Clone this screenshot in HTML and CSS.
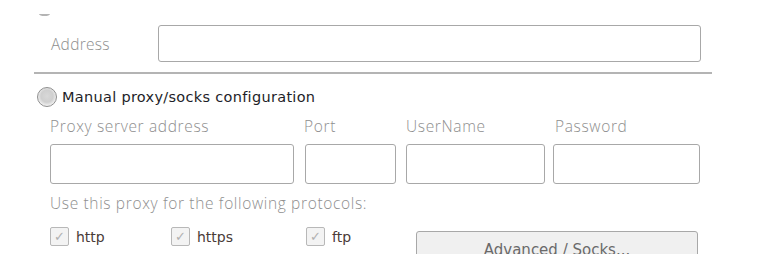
FILE: index.html
```html
<!DOCTYPE html>
<html>
<head>
<meta charset="utf-8">
<link rel="stylesheet" href="styles.css">
</head>
<body>
<div class="frame">
  <div class="top-strip"><span class="radio-stub"></span></div>
  <div class="address-row">
    <span class="label address-label">Address</span>
    <span class="input address-input"></span>
  </div>
  <div class="divider"></div>
  <div class="radio-row">
    <span class="radio"></span>
    <span class="radio-text">Manual proxy/socks configuration</span>
  </div>
  <div class="proxy-grid">
    <span class="label">Proxy server address</span>
    <span class="label port-label">Port</span>
    <span class="label">UserName</span>
    <span class="label pass-label">Password</span>
    <span class="input w-server"></span>
    <span class="input w-port"></span>
    <span class="input w-user"></span>
    <span class="input w-pass"></span>
  </div>
  <div class="label protocols">Use this proxy for the following protocols:</div>
  <div class="check-row">
    <span class="check c-http"><span class="box">&#10003;</span>http</span>
    <span class="check c-https"><span class="box">&#10003;</span>https</span>
    <span class="check c-ftp"><span class="box">&#10003;</span>ftp</span>
    <span class="button">Advanced / Socks...</span>
  </div>
</div>
</body>
</html>
```

FILE: styles.css
```css
html, body {
  margin: 0;
  padding: 0;
  background: #ffffff;
}
.frame {
  width: 760px;
  height: 254px;
  overflow: hidden;
  font-family: "DejaVu Sans", Verdana, sans-serif;
}
.top-strip {
  height: 16px;
  padding-top: 12px;
  box-sizing: border-box;
}
.radio-stub {
  display: block;
  margin-left: 39px;
  width: 11px;
  height: 2px;
  border-bottom: 2px solid #b4b4b4;
  border-radius: 0 0 50% 50%;
}
.label {
  font-family: "Open Sans", sans-serif;
  font-weight: 300;
  font-size: 15.5px;
  letter-spacing: 0.65px;
  color: #8e8e8e;
}
.address-row {
  display: flex;
  align-items: center;
  margin-top: 9px;
  padding-left: 51px;
  height: 37px;
}
.address-label {
  width: 107px;
  letter-spacing: 0.3px;
}
.input {
  display: block;
  box-sizing: border-box;
  border: 1px solid #a8a8a8;
  border-radius: 3px;
  background: #fff;
}
.address-input {
  width: 543px;
  height: 37px;
}
.divider {
  margin: 10px 0 0 34px;
  width: 678px;
  height: 2px;
  background: #b4b4b4;
}
.radio-row {
  display: flex;
  align-items: center;
  margin-top: 13px;
  padding-left: 37px;
  height: 20px;
}
.radio {
  width: 20px;
  height: 20px;
  box-sizing: border-box;
  border-radius: 50%;
  border: 1px solid #8f8f8f;
  background: radial-gradient(circle at 50% 45%, #d8d8d8 0, #cfcfcf 45%, #f4f4f4 75%, #e0e0e0 100%);
  margin-right: 5px;
}
.radio-text {
  font-size: 14.5px;
  color: #1e1e28;
  letter-spacing: 0.3px;
}
.proxy-grid {
  display: grid;
  grid-template-columns: 255px 101px 147px 147px;
  grid-template-rows: 26px 40px;
  row-gap: 3px;
  margin-top: 8px;
  padding-left: 50px;
}
.port-label { margin-left: -1px; }
.pass-label { margin-left: 2px; }
.w-server { width: 244px; height: 40px; }
.w-port { width: 91px; height: 40px; }
.w-user { width: 139px; height: 40px; }
.w-pass { width: 147px; height: 40px; }
.protocols {
  margin-top: 8px;
  padding-left: 50px;
  height: 22px;
}
.check-row {
  display: flex;
  align-items: flex-start;
  margin-top: 13px;
  padding-left: 50px;
}
.check {
  display: flex;
  align-items: center;
  font-family: "DejaVu Sans", sans-serif;
  font-size: 14px;
  color: #4a3b38;
  height: 19px;
}
.box {
  width: 19px;
  height: 19px;
  box-sizing: border-box;
  border: 1px solid #b8b8b8;
  border-radius: 2px;
  background: #f3f3f3;
  color: #b0b0b0;
  font-size: 13px;
  display: flex;
  align-items: center;
  justify-content: center;
  margin-right: 7px;
}
.c-http { width: 121px; }
.c-https { width: 135px; }
.c-ftp { width: 110px; }
.button {
  margin-top: 4px;
  width: 282px;
  height: 34px;
  box-sizing: border-box;
  border: 1px solid #a8a8a8;
  border-radius: 3px;
  background: #f0f0f0;
  color: #6a6a6a;
  font-size: 15px;
  text-align: center;
  padding-top: 9px;
}
```
